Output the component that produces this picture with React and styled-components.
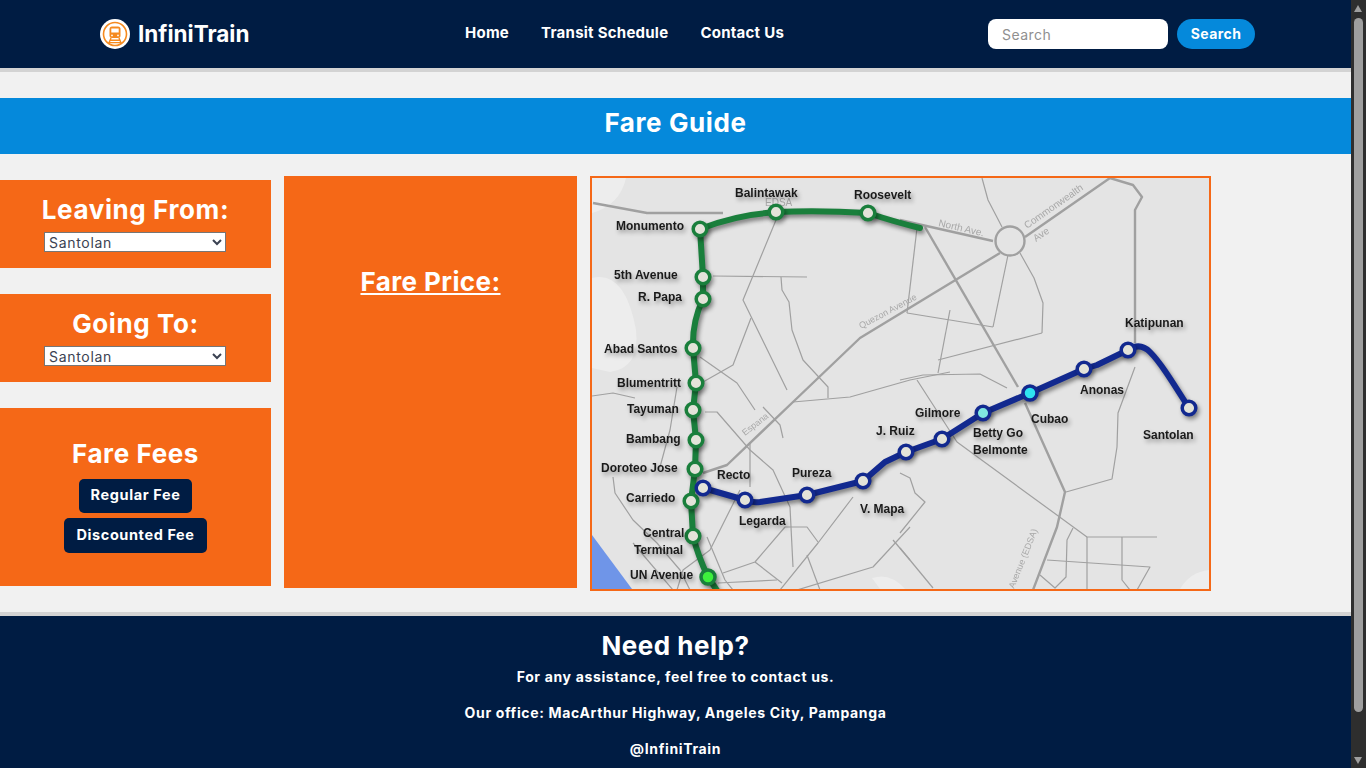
import React from 'react'
import styled, { createGlobalStyle } from 'styled-components'

const navy = '#001c43'
const orange = '#f56817'
const blue = '#0589db'
const font = `'Inter', 'Liberation Sans', sans-serif`

const Global = createGlobalStyle`
  html {
    scrollbar-width: none;
  }
  body {
    margin: 0;
    background: #f1f1f1;
    font-family: ${font};
  }
`

const Page = styled.div`
  margin-right: 15px;
`
const ScrollTrack = styled.div`
  position: fixed;
  top: 0;
  right: 0;
  bottom: 0;
  width: 15px;
  background: #2e2e2e;
`
const ScrollThumb = styled.div`
  position: absolute;
  top: 18px;
  left: 3px;
  width: 9px;
  height: 694px;
  border-radius: 5px;
  background: #9f9f9f;
`
const ScrollArrow = styled.div`
  position: absolute;
  left: 3px;
  ${p => (p.$down ? 'bottom: 4px;' : 'top: 5px;')}
  width: 0;
  height: 0;
  border-left: 4.5px solid transparent;
  border-right: 4.5px solid transparent;
  ${p => (p.$down ? 'border-top: 7px solid #9f9f9f;' : 'border-bottom: 7px solid #9f9f9f;')}
`

const Header = styled.header`
  display: flex;
  align-items: center;
  height: 68px;
  padding-left: 100px;
  background: ${navy};
  border-bottom: 4px solid #d3d3d3;
`
const Brand = styled.div`
  display: flex;
  align-items: center;
  flex-shrink: 0;
  gap: 8px;
  width: 150px;
  color: #fff;
  font-size: 22.5px;
  font-weight: 700;
  white-space: nowrap;
  svg { flex-shrink: 0; }
`
const BrandName = styled.span`
  margin-bottom: 2px;
`
const Nav = styled.nav`
  display: flex;
  gap: 32px;
  margin-left: 215px;
  margin-bottom: 3px;
`
const NavLink = styled.a`
  color: #fff;
  font-size: 15px;
  font-weight: 700;
  letter-spacing: 0.25px;
  white-space: nowrap;
`
const SearchForm = styled.form`
  display: flex;
  align-items: center;
  gap: 9px;
  margin-left: 204px;
`
const SearchInput = styled.input`
  box-sizing: border-box;
  width: 180px;
  height: 30px;
  padding: 0 14px;
  border: 0;
  border-radius: 8px;
  background: #fff;
  font: 14px ${font};
  letter-spacing: 0.45px;
  &::placeholder { color: #8f8f8f; }
`
const SearchButton = styled.button`
  width: 78px;
  height: 30px;
  padding: 0 0 2px;
  border: 0;
  border-radius: 15px;
  background: ${blue};
  color: #fff;
  font: 700 14px ${font};
  letter-spacing: 0.45px;
`
const Band = styled.h1`
  margin: 26px 0 22px;
  height: 56px;
  line-height: 49px;
  background: ${blue};
  color: #fff;
  text-align: center;
  font-size: 26px;
  font-weight: 700;
  letter-spacing: 0.6px;
`
const Row = styled.main`
  display: flex;
  align-items: flex-start;
  gap: 13px;
`
const Side = styled.div`
  display: flex;
  flex-direction: column;
  gap: 26px;
  width: 271px;
  padding-top: 4px;
`
const Panel = styled.section`
  display: flex;
  flex-direction: column;
  align-items: center;
  height: ${p => p.$h}px;
  background: ${orange};
  color: #fff;
`
const PanelTitle = styled.h2`
  margin: ${p => p.$top}px 0 ${p => p.$bottom}px;
  font-size: 26px;
  line-height: 30px;
  font-weight: 700;
  letter-spacing: 0.6px;
`
const StationSelect = styled.select`
  box-sizing: border-box;
  width: 182px;
  height: 20px;
  margin-right: 1px;
  padding: 0;
  border: 1px solid #767676;
  background: #fff;
  color: #3b4252;
  font: 14px ${font};
  letter-spacing: 0.7px;
`
const FeeButton = styled.button`
  height: ${p => p.$h}px;
  padding: 0 12px 3px;
  margin-bottom: 5px;
  border: 0;
  border-radius: 5px;
  background: ${navy};
  color: #fff;
  font: 700 14.5px ${font};
  letter-spacing: 0.6px;
`
const PricePanel = styled.section`
  width: 293px;
  height: 412px;
  padding-top: 89px;
  box-sizing: border-box;
  background: ${orange};
  color: #fff;
  text-align: center;
`
const PriceTitle = styled.h2`
  margin: 0;
  font-size: 26px;
  line-height: 34px;
  font-weight: 700;
  letter-spacing: 0.4px;
  text-decoration: underline;
`
const MapFrame = styled.figure`
  box-sizing: border-box;
  width: 621px;
  height: 415px;
  margin: 0;
  border: 2px solid ${orange};
  background: #e4e4e4;
  overflow: hidden;
`
const MapSvg = styled.svg`
  display: block;
  width: 617px;
  height: 411px;
  filter: blur(0.35px);
`
const Road = styled.polyline`
  fill: none;
  stroke: #a0a0a0;
  stroke-width: ${p => p.$w || 1.2};
  stroke-linejoin: round;
`
const Line = styled.path`
  fill: none;
  stroke: ${p => p.$c};
  stroke-width: 6;
  stroke-linecap: round;
  stroke-linejoin: round;
  filter: drop-shadow(2px 3px 2px rgba(0, 0, 0, 0.45));
`
const Station = styled.circle`
  fill: ${p => p.$fill || '#e3e3d9'};
  stroke: ${p => p.$c};
  stroke-width: 3.5;
  filter: drop-shadow(2px 3px 2px rgba(0, 0, 0, 0.4));
`
const Label = styled.text`
  font-family: 'Liberation Sans', Arial, sans-serif;
  font-size: 12px;
  font-weight: 700;
  fill: #1a1a1a;
  filter: drop-shadow(2px 3px 2px rgba(0, 0, 0, 0.35));
`
const RoadName = styled.text`
  font-family: 'Liberation Sans', Arial, sans-serif;
  font-size: ${p => p.$s || 10}px;
  fill: #a8a8a8;
`
const Footer = styled.footer`
  margin-top: 21px;
  height: 195px;
  padding-top: 15px;
  box-sizing: border-box;
  border-top: 4px solid #d3d3d3;
  background: ${navy};
  color: #fff;
  text-align: center;
`
const FooterTitle = styled.h2`
  margin: 0 0 7px;
  font-size: 26px;
  line-height: 30px;
  font-weight: 700;
  letter-spacing: 0.5px;
`
const FooterLine = styled.p`
  margin: 0 0 18px;
  font-size: 14px;
  line-height: 18px;
  font-weight: 700;
  letter-spacing: 0.65px;
`

const thinRoads = [
  '713,276 807,277', '776,220 743,300 787,390', '751,318 733,365 703,382',
  '781,277 782,290 789,302 792,330 803,360 828,387 828,398',
  '793,402 850,397 910,380 950,372', '592,396 613,393 635,398', '677,387 670,430 660,467',
  '613,477 615,493 633,520 657,543 680,570 690,590', '705,412 717,412 750,450 773,470 790,507 793,567',
  '750,442 750,487', '783,438 780,425 763,407', '740,490 710,550 683,570 677,590',
  '785,527 755,562 723,573', '755,562 782,583', '785,527 807,527 818,542', '853,497 818,543 780,590',
  '807,555 820,590', '718,583 777,580', '797,590 873,567 910,527', '893,540 910,560',
  '707,537 725,580 733,590', '633,543 673,590', '700,357 737,383 755,410',
  '982,178 988,200 1002,227', '1020,253 1034,278 1043,303 1042,333', '1042,333 938,360', '950,310 938,373',
  '1008,255 993,327', '907,313 993,327', '917,380 957,442 1087,537 1157,537', '900,380 923,375 980,374 1007,388',
  '1135,367 1118,413 1117,447 1112,479 1066,492', '1047,560 1150,567 1137,590', '1087,537 1087,590',
  '1122,537 1122,580 1130,590', '1073,528 1067,540 1066,577 1055,588 1040,575', '900,473 910,478 915,493 925,502 900,533',
  '900,548 933,588', '917,228 907,313',
]
const thickRoads = [
  '593,203 647,213 723,213', '703,473 727,465 793,402 860,338 1000,253',
  '900,220 993,241', '1025,237 1110,178 1133,185 1142,197 1135,210 1135,343',
  '925,227 1018,387', '1025,403 1065,492 1057,527 1033,590',
]
const greenStops = [
  [700, 229], [776, 212], [868, 213], [703, 277], [703, 299], [693, 348], [696, 383],
  [693, 410], [696, 440], [695, 469], [691, 501], [693, 536],
]
const blueStops = [
  [703, 488], [745, 500], [807, 495], [863, 481], [906, 452], [942, 439], [1084, 369], [1128, 350], [1189, 408],
]
const labels = [
  ['Balintawak', 735, 197], ['Roosevelt', 854, 199], ['Monumento', 616, 230], ['5th Avenue', 614, 279],
  ['R. Papa', 638, 301], ['Abad Santos', 604, 353], ['Blumentritt', 617, 387], ['Tayuman', 627, 413],
  ['Bambang', 626, 443], ['Doroteo Jose', 601, 472], ['Carriedo', 626, 502], ['Central', 643, 537],
  ['Terminal', 634, 554], ['UN Avenue', 630, 579], ['Recto', 717, 479], ['Legarda', 739, 525],
  ['Pureza', 792, 477], ['V. Mapa', 860, 513], ['J. Ruiz', 876, 435], ['Gilmore', 915, 417],
  ['Betty Go', 973, 437], ['Belmonte', 973, 454], ['Cubao', 1031, 423], ['Anonas', 1080, 394],
  ['Katipunan', 1125, 327], ['Santolan', 1143, 439],
]

function TrainLogo() {
  return (
    <svg width="30" height="30" viewBox="0 0 30 30">
      <circle cx="15" cy="15" r="15" fill="#fff" />
      <circle cx="15" cy="15" r="11.5" fill="none" stroke="#f58a1f" strokeWidth="1.6" />
      <rect x="9.5" y="7.5" width="11" height="11.5" rx="2.5" fill="#f58a1f" />
      <rect x="11.3" y="9.5" width="7.4" height="4" fill="#fff" />
      <circle cx="12" cy="16.4" r="0.9" fill="#fff" />
      <circle cx="18" cy="16.4" r="0.9" fill="#fff" />
      <path d="M11 19 L8.5 25 M19 19 L21.5 25 M10 21.3 H20 M9.2 23.6 H20.8" stroke="#f58a1f" strokeWidth="1.4" fill="none" />
    </svg>
  )
}

function MetroMap() {
  return (
    <MapSvg viewBox="592 178 617 411">
      <path d="M592 178 H626 Q620 205 592 213 Z" fill="#ededed" />
      <path d="M592 278 Q625 270 636 330 Q640 368 610 372 L592 368 Z" fill="#ededed" />
      <path d="M872 578 Q890 572 905 589 H880 Z" fill="#ededed" />
      <path d="M1180 589 Q1190 572 1209 570 V589 Z" fill="#ededed" />
      <path d="M592 535 L632 589 H592 Z" fill="#6f95e8" />
      {thinRoads.map(pts => <Road key={pts} points={pts} />)}
      {thickRoads.map(pts => <Road key={pts} points={pts} $w={2.4} />)}
      <circle cx="1010" cy="241" r="14.5" fill="none" stroke="#a0a0a0" strokeWidth="2.4" />
      <RoadName x="938" y="226" transform="rotate(13 938 226)">North Ave.</RoadName>
      <RoadName x="1027" y="229" transform="rotate(-35 1027 229)">Commonwealth</RoadName>
      <RoadName x="1036" y="242" transform="rotate(-35 1036 242)">Ave</RoadName>
      <RoadName x="861" y="329" transform="rotate(-28 861 329)" $s={9}>Quezon Avenue</RoadName>
      <RoadName x="745" y="436" transform="rotate(-38 745 436)" $s={9}>Espana</RoadName>
      <RoadName x="765" y="206" $s={10}>EDSA</RoadName>
      <RoadName x="1014" y="589" transform="rotate(-68 1014 589)" $s={9}>Avenue (EDSA)</RoadName>
      <Line $c="#1a7f3c" d="M920 228 Q895 222 868 213 Q820 210 776 212 Q735 215 700 229 L703 277 L703 299 Q692 322 693 348 L696 383 L693 410 L696 440 L695 469 L691 501 L693 536 Q698 556 708 577 L718 592" />
      <Line $c="#12298f" d="M703 488 L745 500 Q752 503 760 502 L807 495 L863 481 L885 462 L906 452 L942 439 L983 413 L1030 393 L1084 369 L1097 365 L1128 350 Q1140 342 1150 352 C1160 362 1170 378 1189 408" />
      {greenStops.map(([x, y]) => <Station key={`${x}-${y}`} cx={x} cy={y} r="6.8" $c="#1a7f3c" />)}
      <Station cx="708" cy="577" r="7" $c="#1a7f3c" $fill="#3df03d" />
      {blueStops.map(([x, y]) => <Station key={`${x}-${y}`} cx={x} cy={y} r="6.8" $c="#12298f" />)}
      <Station cx="983" cy="413" r="6.8" $c="#12298f" $fill="#7fe8e0" />
      <Station cx="1030" cy="393" r="7" $c="#12298f" $fill="#2fe3f0" />
      {labels.map(([name, x, y]) => <Label key={name} x={x} y={y}>{name}</Label>)}
    </MapSvg>
  )
}

export default function App() {
  return (
    <>
      <Global />
      <Page>
        <Header>
          <Brand><TrainLogo /><BrandName>InfiniTrain</BrandName></Brand>
          <Nav>
            <NavLink>Home</NavLink>
            <NavLink>Transit Schedule</NavLink>
            <NavLink>Contact Us</NavLink>
          </Nav>
          <SearchForm>
            <SearchInput placeholder="Search" />
            <SearchButton type="button">Search</SearchButton>
          </SearchForm>
        </Header>
        <Band>Fare Guide</Band>
        <Row>
          <Side>
            <Panel $h={88}>
              <PanelTitle $top={15} $bottom={7}>Leaving From:</PanelTitle>
              <StationSelect defaultValue="Santolan"><option>Santolan</option></StationSelect>
            </Panel>
            <Panel $h={88}>
              <PanelTitle $top={15} $bottom={7}>Going To:</PanelTitle>
              <StationSelect defaultValue="Santolan"><option>Santolan</option></StationSelect>
            </Panel>
            <Panel $h={178}>
              <PanelTitle $top={31} $bottom={10}>Fare Fees</PanelTitle>
              <FeeButton $h={34}>Regular Fee</FeeButton>
              <FeeButton $h={35}>Discounted Fee</FeeButton>
            </Panel>
          </Side>
          <PricePanel>
            <PriceTitle>Fare Price:</PriceTitle>
          </PricePanel>
          <MapFrame><MetroMap /></MapFrame>
        </Row>
        <Footer>
          <FooterTitle>Need help?</FooterTitle>
          <FooterLine>For any assistance, feel free to contact us.</FooterLine>
          <FooterLine>Our office: MacArthur Highway, Angeles City, Pampanga</FooterLine>
          <FooterLine>@InfiniTrain</FooterLine>
        </Footer>
      </Page>
      <ScrollTrack>
        <ScrollArrow />
        <ScrollThumb />
        <ScrollArrow $down />
      </ScrollTrack>
    </>
  )
}
